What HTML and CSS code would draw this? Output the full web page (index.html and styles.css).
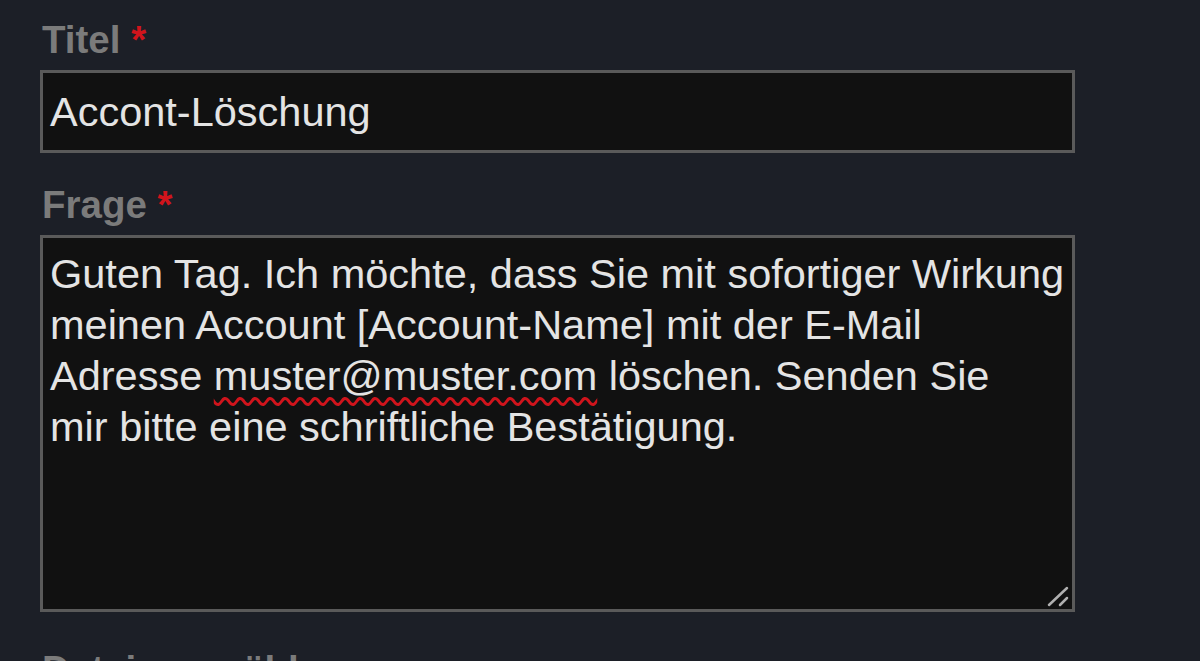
FILE: index.html
```html
<!DOCTYPE html>
<html lang="de">
<head>
    <meta charset="UTF-8"/>
    <title>Anfrage</title>
    <link rel="stylesheet" href="styles.css">
</head>
<body>
<form class="frm">
    <div class="row">
        <label class="lbl">Titel <span class="req">*</span></label>
        <div class="ipt">Accont-Löschung</div>
    </div>
    <div class="row">
        <label class="lbl">Frage <span class="req">*</span></label>
        <div class="area">Guten Tag. Ich möchte, dass Sie mit sofortiger Wirkung<br>
            meinen Account [Account-Name] mit der E-Mail<br>
            Adresse <span class="spell">muster@muster.com</span> löschen. Senden Sie<br>
            mir bitte eine schriftliche Bestätigung.
            <svg class="grip" width="24" height="24" viewBox="0 0 24 24">
                <line x1="3" y1="22" x2="21" y2="5" stroke="#b0b0b0" stroke-width="2.5" stroke-linecap="round"/>
                <line x1="14" y1="22" x2="21" y2="15" stroke="#b0b0b0" stroke-width="2.5" stroke-linecap="round"/>
            </svg>
        </div>
    </div>
    <div class="row last">
        <label class="lbl">Datei auswählen</label>
    </div>
</form>
</body>
</html>
```

FILE: styles.css
```css
body {
    margin: 0;
    background-color: #1c1f27;
    font-family: "Liberation Sans", Arial, sans-serif;
    overflow: hidden;
}

.frm {
    width: 1035px;
    padding: 18px 0 0 40px;
}

.row {
    margin-bottom: 30px;
}

.last {
    margin-top: 36px;
}

.lbl {
    display: block;
    color: #7b7b7b;
    font-weight: bold;
    font-size: 38.5px;
    line-height: 44px;
    padding-left: 2px;
    margin-bottom: 8px;
}

.req {
    color: #d0141c;
}

.ipt {
    border: 3px solid #5a5a5a;
    background-color: #111111;
    color: #e4e4e4;
    font-size: 41.5px;
    line-height: 51px;
    padding: 13px 7px;
}

.area {
    position: relative;
    border: 3px solid #5a5a5a;
    background-color: #111111;
    color: #e4e4e4;
    font-size: 41.5px;
    line-height: 51px;
    padding: 10px 7px 9px;
    height: 352px;
    white-space: nowrap;
}

.spell {
    text-decoration: underline wavy #d0141c;
    text-decoration-thickness: 2.5px;
    text-underline-offset: 7px;
}

.grip {
    position: absolute;
    right: 2px;
    bottom: 2px;
}
```
